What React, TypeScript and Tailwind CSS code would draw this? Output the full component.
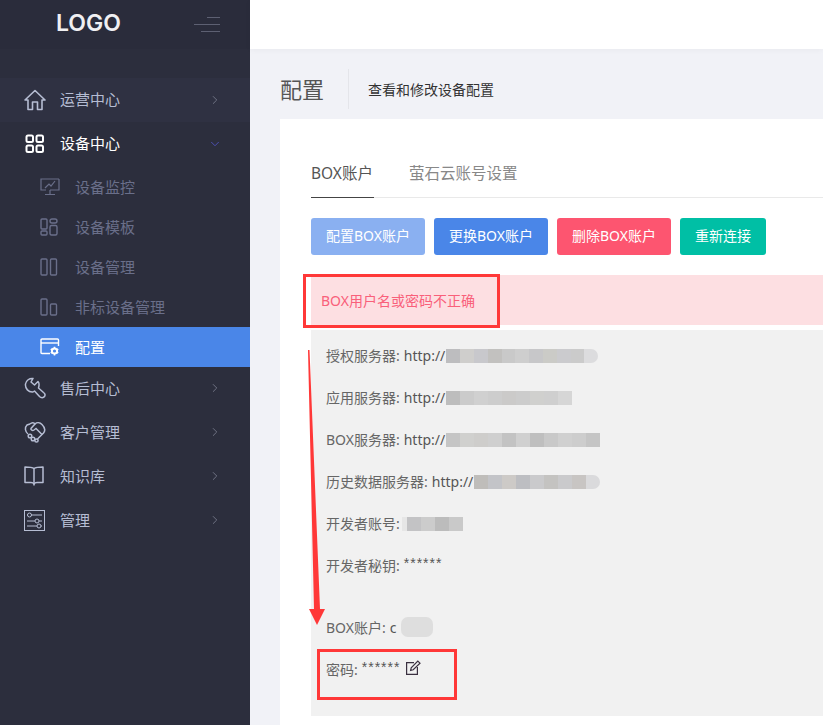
import React from 'react';
import { ChevronRight, ChevronDown } from 'lucide-react';

const IconHome = () => (
  <svg width="22" height="22" viewBox="0 0 22 22" fill="none" stroke="currentColor" strokeWidth="1.6">
    <path d="M1 11 L11 1.5 L21 11 L18 11 L18 20.5 L13.5 20.5 L13.5 13 L8.5 13 L8.5 20.5 L4 20.5 L4 11 Z" strokeLinejoin="round" />
  </svg>
);

const IconGrid = () => (
  <svg width="20" height="20" viewBox="0 0 20 20" fill="none" stroke="currentColor" strokeWidth="2">
    <rect x="1.5" y="1.5" width="6.5" height="6.5" rx="1.5" />
    <rect x="11.5" y="1.5" width="6.5" height="6.5" rx="1.5" />
    <rect x="1.5" y="11.5" width="6.5" height="6.5" rx="1.5" />
    <rect x="11.5" y="11.5" width="6.5" height="6.5" rx="1.5" />
  </svg>
);

const IconMonitor = () => (
  <svg width="20" height="18" viewBox="0 0 20 18" fill="none" stroke="currentColor" strokeWidth="1.2">
    <path d="M19 1 L1 1 L1 12 L6 12 M10 12 L19 12 L19 1" />
    <path d="M5 10 L9 6 L11 8 L15 3" />
    <path d="M10 12 L10 16 M5 16.5 L15 16.5" />
  </svg>
);

const IconTemplate = () => (
  <svg width="18" height="18" viewBox="0 0 18 18" fill="none" stroke="currentColor" strokeWidth="1.4">
    <rect x="1" y="1" width="6" height="10" rx="1" />
    <rect x="1" y="13" width="6" height="4" rx="1" />
    <rect x="10" y="1" width="7" height="4" rx="2" />
    <rect x="10" y="7.5" width="7" height="9.5" rx="1.5" />
  </svg>
);

const IconColumns = () => (
  <svg width="18" height="18" viewBox="0 0 18 18" fill="none" stroke="currentColor" strokeWidth="1.4">
    <rect x="1" y="1" width="6" height="16" rx="1" />
    <rect x="10.5" y="1" width="6" height="16" rx="1" />
  </svg>
);

const IconBars = () => (
  <svg width="18" height="18" viewBox="0 0 18 18" fill="none" stroke="currentColor" strokeWidth="1.4">
    <rect x="1" y="1" width="6" height="16" rx="1" />
    <rect x="10.5" y="6" width="6" height="11" rx="1" />
  </svg>
);

const IconConfig = () => (
  <svg width="20" height="18" viewBox="0 0 20 18" fill="none" stroke="currentColor" strokeWidth="1.4">
    <path d="M10 15.5 L2 15.5 Q1 15.5 1 14.5 L1 2 Q1 1 2 1 L17.5 1 Q18.5 1 18.5 2 L18.5 8" />
    <path d="M1 5 L18.5 5" />
    <circle cx="14.5" cy="13" r="2.6" strokeWidth="2" />
    <path d="M14.5 8.8 L14.5 10 M14.5 16 L14.5 17.4 M10.8 11 L12 11.8 M17 14.2 L18.2 15 M10.8 15 L12 14.2 M17 11.8 L18.2 11" strokeWidth="1.6" />
  </svg>
);

const IconWrench = () => (
  <svg width="22" height="22" viewBox="0 0 22 22" fill="none" stroke="currentColor" strokeWidth="1.5">
    <path d="M9 1.5 C5.5 1 2 3.5 1.5 7 C1 11.5 4.5 15.5 9 15 L10.5 14 L15.5 19.5 C17 21 19.5 21 20.5 19.5 C21.5 18 21 16.5 19.5 15.5 L14.5 11 C15.5 7.5 15 5.5 14 4.5 L10.5 8 L7 5 Z" strokeLinejoin="round" />
  </svg>
);

const IconHandshake = () => (
  <svg width="22" height="22" viewBox="0 0 22 22" fill="none" stroke="currentColor" strokeWidth="1.5">
    <path d="M6 3 C8 1 10 1.5 11 3 C13 1 16 1.5 18 3.5 C20.5 6 21.5 9.5 19.5 12 L13.5 18" />
    <path d="M4 13 C1 10.5 0.5 6.5 3 4 L6 3" />
    <path d="M11 3 L7 7.5 C6.5 9 8.5 10 10 9 L12 7.5 L18 13.5" />
    <circle cx="6" cy="15" r="1.8" />
    <circle cx="9" cy="18" r="1.8" />
    <circle cx="12.5" cy="19.5" r="1.6" />
  </svg>
);

const IconBook = () => (
  <svg width="20" height="20" viewBox="0 0 20 20" fill="none" stroke="currentColor" strokeWidth="1.5">
    <path d="M10 2.5 C8 1 4.5 1 1 1 L1 16.5 L7 16.5 C8.5 16.5 9.5 17 10 18 C10.5 17 11.5 16.5 13 16.5 L19 16.5 L19 1 C15.5 1 12 1 10 2.5 Z" strokeLinejoin="round" />
    <path d="M10 2.5 L10 19.5" />
  </svg>
);

const IconSliders = () => (
  <svg width="21" height="21" viewBox="0 0 21 21" fill="none" stroke="currentColor" strokeWidth="1">
    <rect x="0.5" y="0.5" width="20" height="20" />
    <path d="M7 5 L18 5 M3 5 L4 5 M3 11 L11 11 M15 11 L18 11 M3 16 L13 16 M17 16 L18 16" />
    <circle cx="5.5" cy="5" r="2" />
    <circle cx="13" cy="11" r="2" />
    <circle cx="15" cy="16" r="2" />
  </svg>
);

const IconEdit = () => (
  <svg className="ml-[6px] -mt-[4px]" width="15" height="15" viewBox="0 0 15 15" fill="none" stroke="#3a3040" strokeWidth="1.2">
    <path d="M8 2.6 L0.6 2.6 L0.6 14.4 L11.4 14.4 L11.4 7" />
    <path d="M4.6 10.4 L5.2 7.8 L11.8 1 L14 3.2 L7.2 9.8 Z" />
  </svg>
);

const subMenu = [
  { label: '设备监控', icon: <IconMonitor /> },
  { label: '设备模板', icon: <IconTemplate /> },
  { label: '设备管理', icon: <IconColumns /> },
  { label: '非标设备管理', icon: <IconBars /> },
];

const bottomMenu = [
  { label: '售后中心', icon: <IconWrench /> },
  { label: '客户管理', icon: <IconHandshake /> },
  { label: '知识库', icon: <IconBook /> },
  { label: '管理', icon: <IconSliders /> },
];

const Sidebar = () => (
  <aside className="flex h-full w-[250px] shrink-0 flex-col bg-[#2c2e3d]">
    <div className="flex h-[49px] items-center bg-[#2a2c3b] pl-[56px] pr-[30px]">
      <span className="pb-[3px] font-['Inter',sans-serif] text-[23px] font-semibold text-[#f0f0f2]">LOGO</span>
      <div className="ml-auto -mt-[1px] flex flex-col items-end gap-[6px]">
        <div className="h-px w-[13px] bg-[#5d6072]" />
        <div className="h-px w-[26px] bg-[#5d6072]" />
        <div className="h-px w-[19px] bg-[#5d6072]" />
      </div>
    </div>
    <nav className="mt-[29px] flex flex-col">
      <div className="flex h-[44px] items-center bg-[#2f3142] pl-[24px] pr-[28px] text-[#b6bdd3]">
        <span className="flex w-[36px]"><IconHome /></span>
        <span className="pb-[2px] text-[15px]">运营中心</span>
        <ChevronRight className="ml-auto h-[14px] w-[14px] text-[#777a8c]" strokeWidth={1.5} />
      </div>
      <div className="flex h-[44px] items-center pl-[25px] pr-[28px] text-white">
        <span className="flex w-[35px]"><IconGrid /></span>
        <span className="pb-[2px] text-[15px]">设备中心</span>
        <ChevronDown className="ml-auto h-[14px] w-[14px] text-[#5054c0]" strokeWidth={1.5} />
      </div>
      <div className="flex flex-col pt-px">
        {subMenu.map((item) => (
          <div key={item.label} className="flex h-[40px] items-center pl-[40px] text-[#6a6f8a]">
            <span className="flex w-[35px]">{item.icon}</span>
            <span className="text-[15px]">{item.label}</span>
          </div>
        ))}
        <div className="flex h-[40px] items-center bg-[#4a86e8] pl-[40px] text-white">
          <span className="flex w-[35px]"><IconConfig /></span>
          <span className="text-[15px]">配置</span>
        </div>
      </div>
      <div className="-mt-px flex flex-col">
        {bottomMenu.map((item) => (
          <div key={item.label} className="flex h-[44px] items-center pl-[24px] pr-[28px] text-[#b6bdd3]">
            <span className="flex w-[36px]">{item.icon}</span>
            <span className="text-[15px]">{item.label}</span>
            <ChevronRight className="ml-auto h-[14px] w-[14px] text-[#777a8c]" strokeWidth={1.5} />
          </div>
        ))}
      </div>
    </nav>
  </aside>
);

const Mosaic = ({ colors, className }: { colors: string[]; className?: string }) => (
  <span className={`ml-px mt-[2px] inline-flex h-[14px] overflow-hidden ${className ?? ''}`}>
    {colors.map((color, i) => (
      <span key={i} className="h-full w-[14px]" style={{ backgroundColor: color }} />
    ))}
  </span>
);

const InfoRow = ({ label, value, children }: { label: string; value?: string; children?: React.ReactNode }) => (
  <div className="flex h-[42px] items-center text-[14px]">
    <span className="text-[#666]">{label}</span>
    {value && <span className="ml-1 text-[#555]">{value}</span>}
    {children}
  </div>
);

const Stars = () => (
  <span className="ml-1 -mt-[3px] font-['Liberation_Sans',sans-serif] tracking-[1px] text-[#555]">******</span>
);

export default function App() {
  return (
    <div className="relative flex h-[725px] w-[823px] overflow-hidden bg-[#f1f2f7] font-['Noto_Sans','Noto_Sans_CJK_SC',sans-serif]">
      <Sidebar />
      <main className="flex min-w-0 flex-1 flex-col">
        <div className="h-[49px] shrink-0 bg-white shadow-[0_1px_6px_rgba(0,0,0,0.04)]" />
        <div className="flex h-[70px] shrink-0 pl-[30px] pt-[20px]">
          <div className="flex h-[40px] items-center">
            <h1 className="w-[68px] text-[22px] text-[#555]">配置</h1>
            <div className="h-[40px] w-px bg-[#e4e5ea]" />
            <span className="ml-[19px] text-[14px] text-[#333]">查看和修改设备配置</span>
          </div>
        </div>
        <section className="ml-[30px] flex-1 bg-white pl-[31px] pt-[31px]">
          <div className="flex h-[48px] border-b border-[#e9e9e9] text-[15.5px]">
            <div className="-mb-px flex h-[48px] w-[63px] items-center whitespace-nowrap border-b border-[#444] text-[#555]">BOX账户</div>
            <div className="ml-[35px] flex h-[47px] items-center text-[#888]">萤石云账号设置</div>
          </div>
          <div className="mt-[20px] flex gap-[9px] text-[14px] text-white">
            <button className="h-[37px] w-[114px] rounded-[3px] bg-[#8ab0f1] pb-[2px]">配置BOX账户</button>
            <button className="h-[37px] w-[114px] rounded-[3px] bg-[#4a86e8] pb-[2px]">更换BOX账户</button>
            <button className="h-[37px] w-[114px] rounded-[3px] bg-[#fd5570] pb-[2px]">删除BOX账户</button>
            <button className="h-[37px] w-[86px] rounded-[3px] bg-[#00bfa5] pb-[2px]">重新连接</button>
          </div>
          <div className="mt-[20px] flex h-[50px] items-center bg-[#fddfe2] pl-[10px] text-[14px] text-[#f9607a]">
            BOX用户名或密码不正确
          </div>
          <div className="mt-[5px] h-[386px] bg-[#f1f1f1] pl-[15px] pt-[4px]">
            <InfoRow label="授权服务器:" value="http://">
              <Mosaic className="w-[152px] rounded-r-[7px]" colors={['#bdbdbf', '#cfcecc', '#c8c8cc', '#c2c1bf', '#c9c9c9', '#cecece', '#c7c7c9', '#cbcbc7', '#cbcbce', '#cbcbcb', '#dcdcde']} />
            </InfoRow>
            <InfoRow label="应用服务器:" value="http://">
              <Mosaic colors={['#bdbdbd', '#cbcbcb', '#d0d0d0', '#cdcdcd', '#cbcac9', '#cccccc', '#d0d0ce', '#cfcfcf', '#d6d6d6']} />
            </InfoRow>
            <InfoRow label="BOX服务器:" value="http://">
              <Mosaic colors={['#c5c5c5', '#d0d0ce', '#cecdcb', '#cfcfcf', '#c3c3c3', '#d0d0d0', '#bfbfbf', '#c9c9c9', '#d0d0d0', '#cdcdcd', '#c5c5c5']} />
            </InfoRow>
            <InfoRow label="历史数据服务器:" value="http://">
              <Mosaic className="-ml-[1px] rounded-r-[7px]" colors={['#bfbdba', '#c3c4c8', '#cdcac7', '#bdbec2', '#cacacc', '#c4c3c1', '#cacacc', '#c8c5c3', '#dadadc']} />
            </InfoRow>
            <InfoRow label="开发者账号:">
              <span className="ml-[2px] mt-[2px] h-[14px] w-[5px] bg-[#e6e6e6]" />
              <Mosaic className="!ml-0" colors={['#c3c3c5', '#cccccc', '#bcbcbc', '#c9c9c9']} />
            </InfoRow>
            <InfoRow label="开发者秘钥:">
              <Stars />
            </InfoRow>
            <div className="h-[20px]" />
            <InfoRow label="BOX账户:" value="c">
              <span className="ml-[5px] h-[20px] w-[32px] rounded-[7px] bg-[#dedede]" />
            </InfoRow>
            <InfoRow label="密码:">
              <Stars />
              <IconEdit />
            </InfoRow>
          </div>
        </section>
      </main>

      {/* red annotations drawn over the screenshot */}
      <div className="absolute left-[303px] top-[274px] h-[54px] w-[197px] border-[3px] border-[#ff3838]" />
      <div className="absolute left-[317px] top-[649px] h-[51px] w-[140px] border-[3px] border-[#ff3838]" />
      <svg className="absolute left-0 top-0" width="823" height="725" fill="#ff3838">
        <polygon points="308,350 309.5,350 320,609 325,609 317,625 309,609 314,609" />
      </svg>
    </div>
  );
}
